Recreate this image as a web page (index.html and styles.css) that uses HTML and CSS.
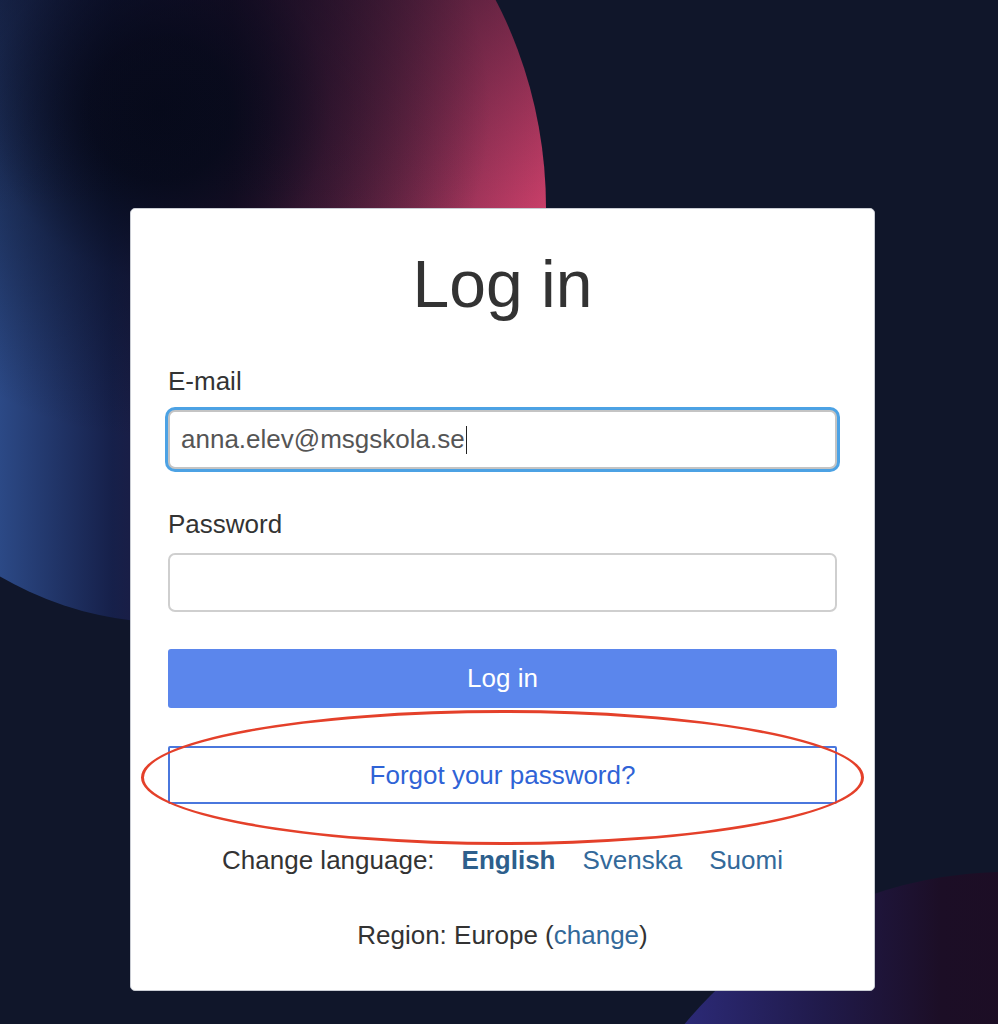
FILE: index.html
```html
<!DOCTYPE html>
<html lang="en">
<head>
    <meta charset="UTF-8">
    <meta name="viewport" content="width=device-width, initial-scale=1.0">
    <title>Log in</title>
    <link rel="stylesheet" href="styles.css">
</head>
<body>
    <!-- background shapes, clipped to the window -->
    <div class="backdrop">
        <div class="blob blob-top"></div>
        <div class="blob blob-bottom"></div>
    </div>

    <main class="card">
        <h1 class="title">Log in</h1>

        <form class="login-form" action="#">
            <div class="form-group">
                <label class="field-label">E-mail</label>
                <div class="field field-focus">anna.elev@msgskola.se<span class="caret"></span></div>
            </div>
            <div class="form-group">
                <label class="field-label">Password</label>
                <div class="field"></div>
            </div>

            <button type="button" class="btn-login">Log in</button>
            <button type="button" class="btn-forgot">Forgot your password?</button>
        </form>

        <!-- language links -->
        <div class="lang-row">
            <span class="lang-label">Change language:</span>
            <a href="#" class="lang-link lang-active">English</a>
            <a href="#" class="lang-link">Svenska</a>
            <a href="#" class="lang-link">Suomi</a>
        </div>

        <p class="region">Region: Europe (<a href="#" class="region-link">change</a>)</p>

        <!-- red mark drawn over the forgot button -->
        <div class="highlight"></div>
    </main>
</body>
</html>
```

FILE: styles.css
```css
body {
    margin: 0;
    height: 1024px;
    overflow: hidden;
    position: relative;
    background-color: #10162a;
    font-family: "Liberation Sans", Arial, sans-serif;
    color: #333;
}

/* big decorative shapes behind the card */
.backdrop {
    position: absolute;
    left: 0;
    top: 0;
    width: 998px;
    height: 1024px;
    overflow: hidden;
}
.blob {
    position: absolute;
    border-radius: 50%;
}
.blob-top {
    left: -202px;
    top: -207px;
    width: 748px;
    height: 830px;
    background:
        linear-gradient(180deg, rgba(10, 10, 30, 0.5) 20%, rgba(10, 10, 30, 0) 50%),
        radial-gradient(circle 330px at 362px 317px, #060a1a 0, rgba(6, 10, 26, 0.92) 70px, rgba(6, 10, 26, 0.4) 170px, rgba(6, 10, 26, 0) 330px),
        linear-gradient(90deg, #3c63a8 0%, #33579a 22%, #16204a 42%, #2a1230 58%, #7a2a4c 80%, #c93f69 100%);
}
.blob-bottom {
    left: 588px;
    top: 872px;
    width: 840px;
    height: 840px;
    background: linear-gradient(90deg, #2e2d80 8%, #201a4a 28%, #1c0e26 42%, #1f0a1c 100%);
}

.card {
    position: relative;
    box-sizing: border-box;
    width: 745px;
    margin: 208px 0 0 130px;
    padding: 39px 37px 36px;
    background: #fff;
    border: 1px solid #c9ccd3;
    border-radius: 5px;
}

.title {
    margin: 0;
    font-size: 66px;
    line-height: 72px;
    font-weight: normal;
    text-align: center;
    color: #333;
}

.login-form {
    margin-top: 43px;
    display: flex;
    flex-direction: column;
}

.form-group {
    margin-bottom: 37px;
}

.field-label {
    display: block;
    margin-bottom: 10px;
    font-size: 26px;
    line-height: 37px;
}

.field {
    box-sizing: border-box;
    height: 59px;
    padding: 0 11px;
    display: flex;
    align-items: center;
    border: 2px solid #cfcfcf;
    border-radius: 7px;
    font-size: 26px;
    color: #555;
    background: #fff;
}
.field-focus {
    border-color: #c4c4c4;
    box-shadow: 0 0 0 3px #4ca2e4;
}
.caret {
    display: inline-block;
    width: 1px;
    height: 28px;
    margin-left: 1px;
    background: #222;
}

.btn-login,
.btn-forgot {
    box-sizing: border-box;
    width: 100%;
    font-family: inherit;
    font-size: 26px;
    cursor: pointer;
}
.btn-login {
    height: 59px;
    margin-bottom: 38px;
    background-color: #5b86ec;
    color: #fff;
    border: none;
    border-radius: 3px;
}
.btn-forgot {
    height: 58px;
    background: #fff;
    color: #2f63d6;
    border: 2px solid #4a77dd;
    border-radius: 2px;
}

.lang-row {
    margin-top: 38px;
    display: flex;
    justify-content: center;
    gap: 27px;
    font-size: 26px;
    line-height: 37px;
}
.lang-link {
    color: #33699a;
    text-decoration: none;
}
.lang-active {
    font-weight: bold;
    color: #2d5f8c;
}

.region {
    margin: 38px 0 0;
    text-align: center;
    font-size: 26px;
    line-height: 37px;
}
.region-link {
    color: #33699a;
    text-decoration: none;
}

.highlight {
    position: absolute;
    left: 10px;
    top: 501px;
    box-sizing: border-box;
    width: 723px;
    height: 135px;
    border: 3px solid #e4402a;
    border-radius: 50%;
    pointer-events: none;
}
```
